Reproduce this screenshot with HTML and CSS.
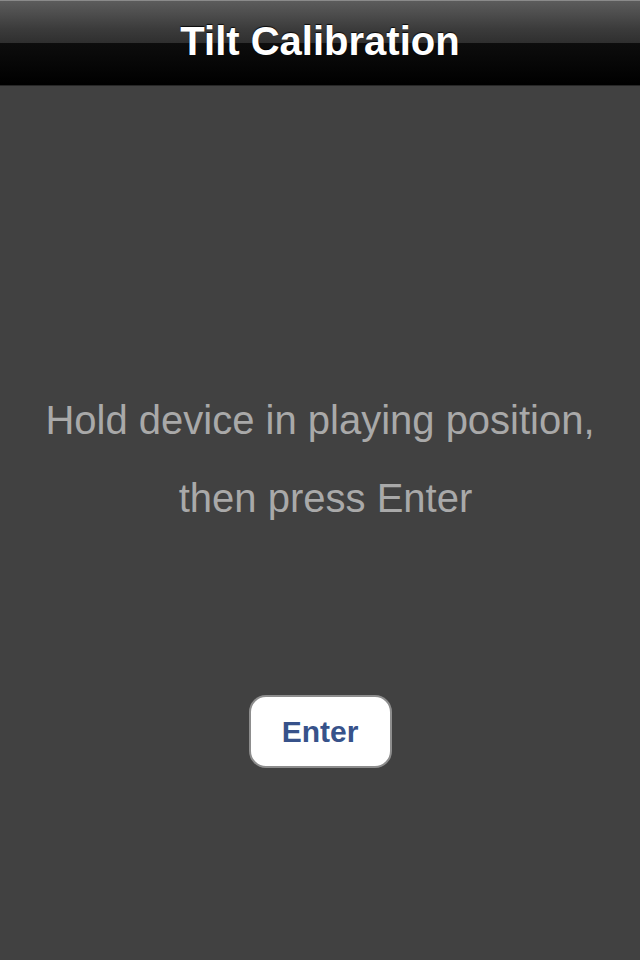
FILE: index.html
```html
<!DOCTYPE html>
<html>
<head>
<meta charset="utf-8">
<link rel="stylesheet" href="styles.css">
</head>
<body>
<div class="screen">
  <header class="navbar">
    <h1 class="title">Tilt Calibration</h1>
  </header>
  <main class="content">
    <p class="message">Hold device in playing position,<br><span class="second-line">then press Enter</span></p>
    <button class="enter-btn">Enter</button>
  </main>
</div>
</body>
</html>
```
FILE: styles.css
```css
html, body {
  margin: 0;
  padding: 0;
  background: #414141;
}
.screen {
  width: 640px;
  height: 960px;
  display: flex;
  flex-direction: column;
  font-family: "Liberation Sans", Arial, sans-serif;
  background: #414141;
  overflow: hidden;
}
.navbar {
  height: 84px;
  border-top: 1px solid #8a8a8a;
  border-bottom: 1px solid #262626;
  box-sizing: content-box;
  background: linear-gradient(to bottom, #5c5c5c 0px, #3a3a3a 29px, #2f2f2f 42px, #0d0d0d 42px, #000000 83px);
  display: flex;
  justify-content: center;
  flex-shrink: 0;
}
.title {
  margin: 0;
  font-size: 40px;
  font-weight: bold;
  color: #ffffff;
  line-height: 80px;
  text-shadow: 0 -1px 1px rgba(0, 0, 0, 0.85);
}
.content {
  flex: 1;
  display: flex;
  flex-direction: column;
  align-items: center;
  padding-top: 295px;
}
.message {
  margin: 0;
  font-size: 40px;
  line-height: 78px;
  color: #a9a9a9;
  text-align: center;
}
.second-line {
  padding-left: 11px;
}
.enter-btn {
  margin-top: 158px;
  width: 143px;
  height: 73px;
  box-sizing: border-box;
  border: 2px solid #8d8d8d;
  border-radius: 17px;
  background: #ffffff;
  font-family: "Liberation Sans", Arial, sans-serif;
  font-size: 30px;
  font-weight: bold;
  line-height: 69px;
  color: #37528a;
  padding: 0;
}
```
